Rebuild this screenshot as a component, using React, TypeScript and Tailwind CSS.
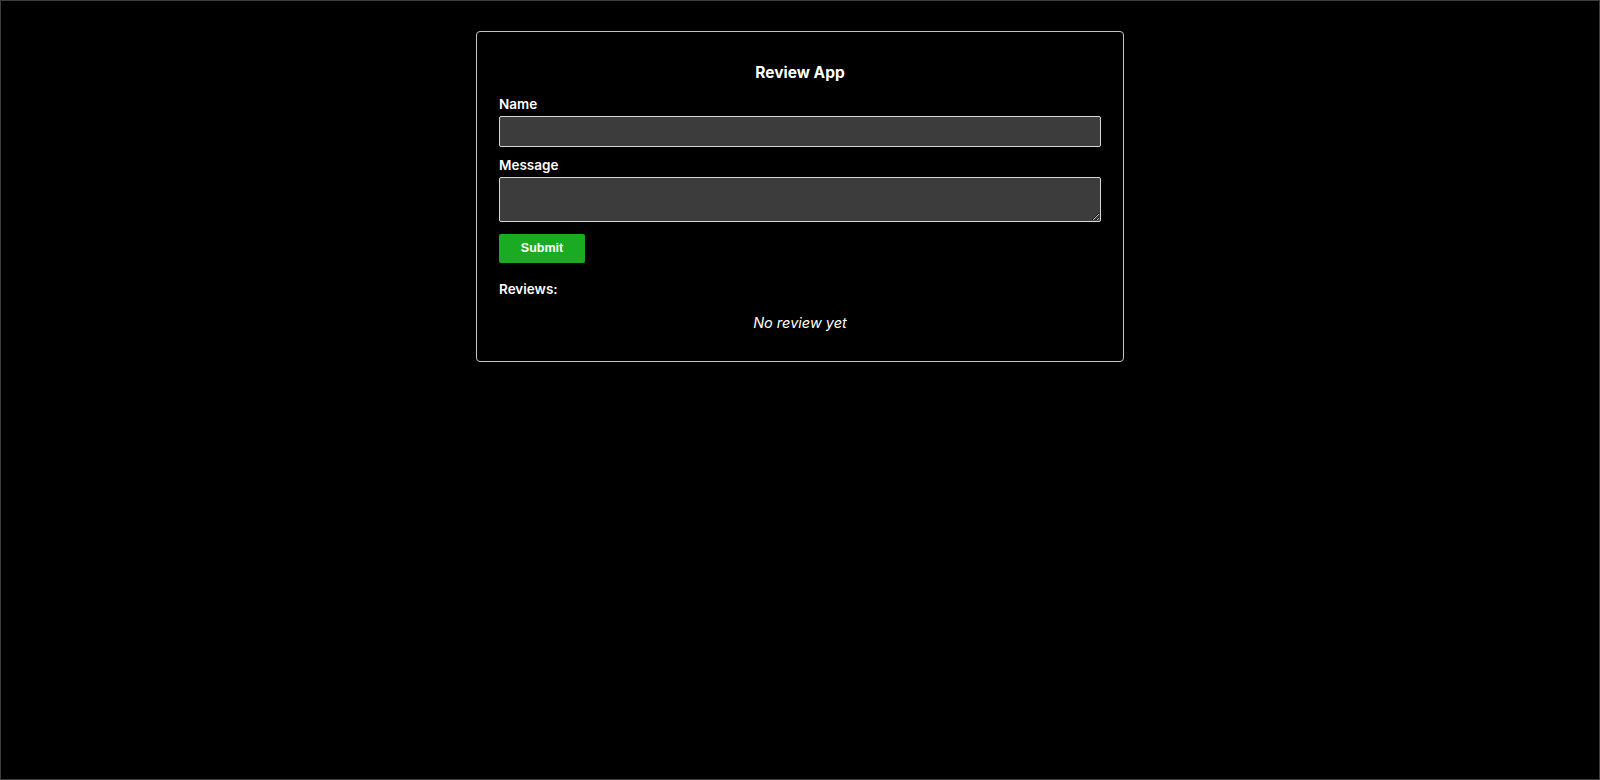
import { useState } from 'react';

interface Review {
	name: string;
	message: string;
}

export default function App() {
	const [name, setName] = useState('');
	const [message, setMessage] = useState('');
	const [reviews, setReviews] = useState<Review[]>([]);

	const submit = () => {
		if (!name.trim() || !message.trim()) return;
		setReviews([...reviews, { name, message }]);
		setName('');
		setMessage('');
	};

	return (
		<div className="h-screen w-full overflow-hidden border border-[#3d3d3d] bg-black font-['Inter','Liberation_Sans',sans-serif] text-white">
			<div className="mx-auto mt-[30px] w-[648px] rounded-[4px] border border-[#c4c4c4] px-[22px] pb-[26px] pt-[30px]">
				<h1 className="text-center text-[15.5px] font-bold leading-[22px]">Review App</h1>
				<div className="mt-[10px] flex flex-col">
					<label className="text-[13.5px] font-semibold leading-[20px]">Name</label>
					<input
						type="text"
						value={name}
						onChange={(e) => setName(e.target.value)}
						className="mt-[2px] h-[31px] w-full rounded-[2px] border border-[#d6d6d6] bg-[#3c3c3c] px-2 text-sm text-white outline-none"
					/>
					<label className="mt-[8px] text-[13.5px] font-semibold leading-[20px]">Message</label>
					<textarea
						value={message}
						onChange={(e) => setMessage(e.target.value)}
						className="mt-[2px] h-[45px] w-full rounded-[2px] border border-[#d6d6d6] bg-[#3c3c3c] px-2 text-sm text-white outline-none"
					/>
					<div className="mt-[12px]">
						<button
							type="button"
							onClick={submit}
							className="h-[29px] w-[86px] rounded-[2px] bg-[#1aab22] font-['Liberation_Sans',Arial,sans-serif] text-[12.5px] font-bold text-white"
						>
							Submit
						</button>
					</div>
				</div>
				<h2 className="mt-[16px] text-[13.5px] font-semibold leading-[20px]">Reviews:</h2>
				{reviews.length === 0 ? (
					<p className="mt-[12px] text-center text-[14.5px] italic leading-[24px]">No review yet</p>
				) : (
					<ul className="mt-[12px] flex flex-col gap-2">
						{reviews.map((review, i) => (
							<li key={i} className="text-sm">
								<span className="font-semibold">{review.name}:</span> {review.message}
							</li>
						))}
					</ul>
				)}
			</div>
		</div>
	);
}
